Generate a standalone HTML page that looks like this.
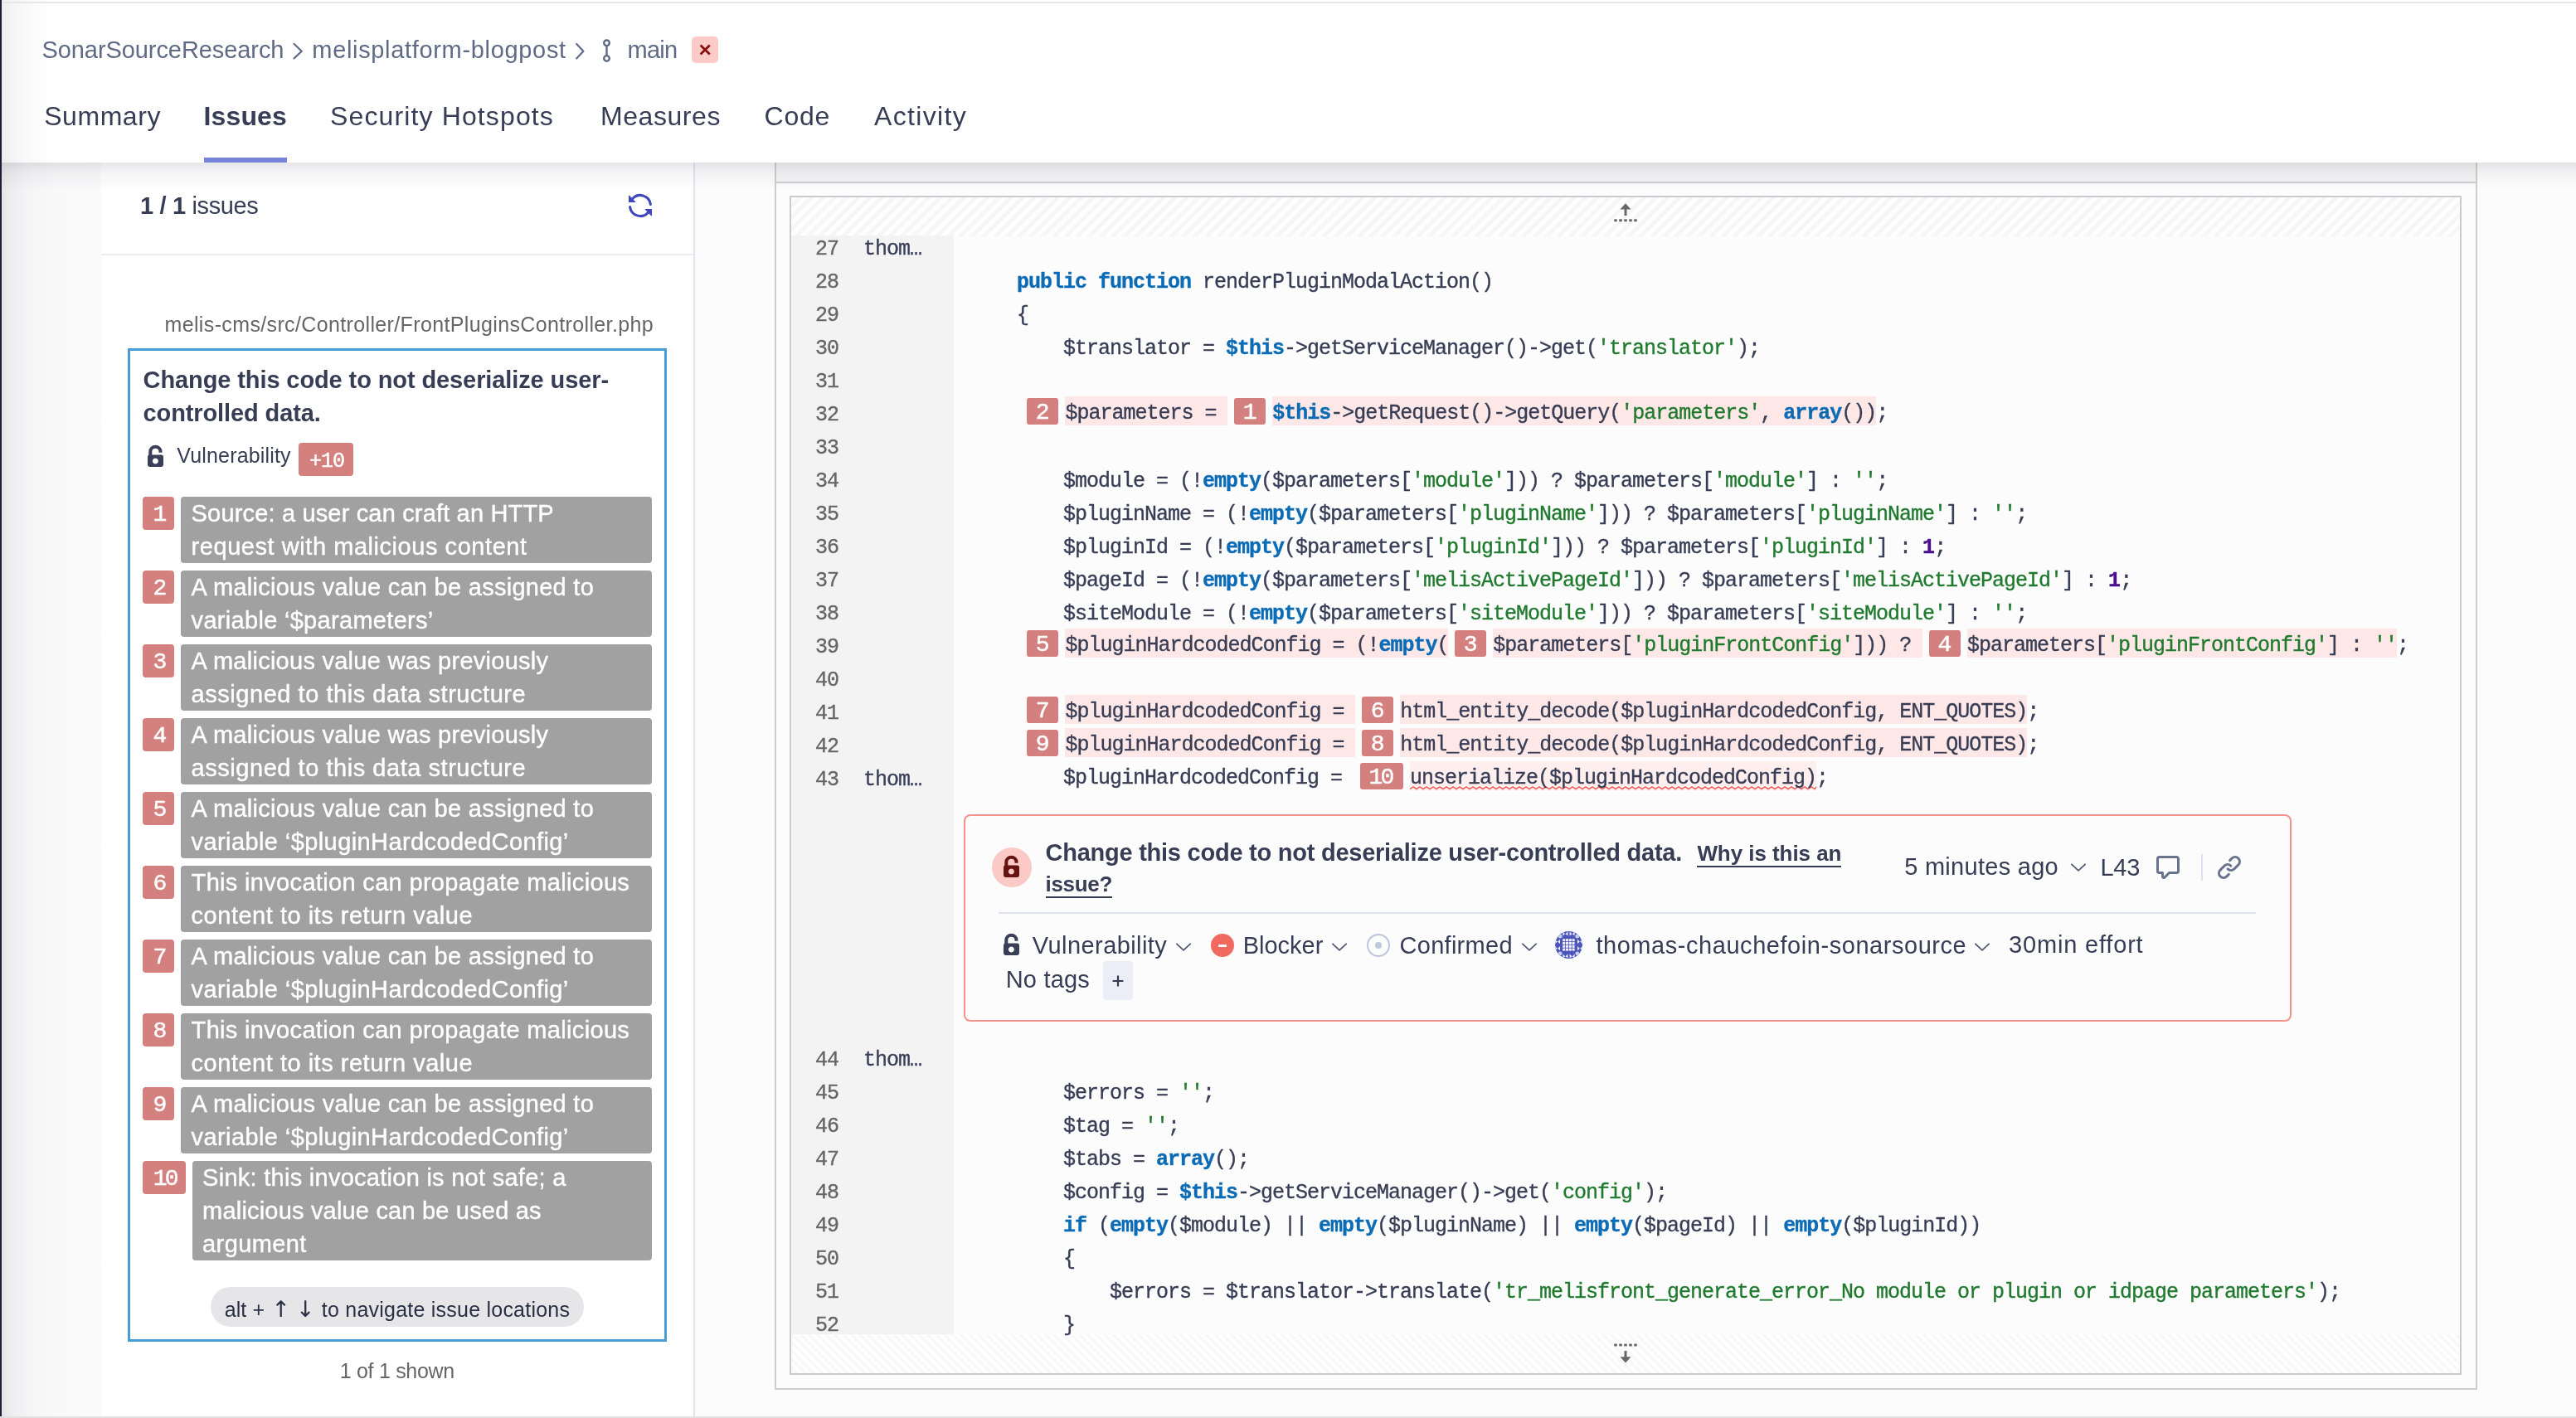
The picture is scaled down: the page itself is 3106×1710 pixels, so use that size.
<!DOCTYPE html><html lang="en"><head><meta charset="utf-8"><title>Issues - melisplatform-blogpost</title><style>
*{box-sizing:border-box;margin:0;padding:0}
html,body{width:3106px;height:1710px;overflow:hidden;background:#fcfcfc}
body{position:relative;font-family:"Liberation Sans",sans-serif;color:#373d55}
#app{position:absolute;left:0;top:0;width:3106px;height:1710px;will-change:transform}
.t{position:absolute;white-space:pre;display:block}
.s{font-family:"Liberation Sans",sans-serif}
.m{font-family:"Liberation Mono",monospace;-webkit-text-stroke:.35px currentColor}
.b{position:absolute}
svg{position:absolute;overflow:visible}
.k{color:#0b6bb5;font-weight:700}
.g{color:#1f7a2e}
.p{color:#4b0f8a;font-weight:700}
.bd{position:absolute;background:#d4807e;color:#fff;border-radius:3px;font-family:"Liberation Mono",monospace;font-weight:400;-webkit-text-stroke:.45px #fff;text-align:center;white-space:pre}
.hl{position:absolute;background:#fde8e7}
</style></head><body><div id="app">
<div class="b" style="left:0.0px;top:0.0px;width:122.0px;height:1710.0px;background:linear-gradient(90deg,#e5e5e7 2px,#eeeef0 14px,#f5f5f6 36px,#f9f9fa 70px,#fafafb 122px)"></div>
<div class="b" style="left:122.0px;top:196.0px;width:716.0px;height:1512.0px;background:#fff;border-right:2px solid #e1e5f2"></div>
<div class="b" style="left:122.0px;top:306.0px;width:714.0px;height:2.0px;background:#ebecf0"></div>
<div class="b" style="left:934.0px;top:190.0px;width:2053.0px;height:1486.0px;background:#fcfcfc;border:2px solid #cdcdcf"></div>
<div class="b" style="left:936.0px;top:196.0px;width:2049.0px;height:24.5px;background:#f5f5f6;border-bottom:2px solid #d0d0d2"></div>
<div class="b" style="left:952.0px;top:236.0px;width:2016.0px;height:1422.0px;background:#fcfcfd;border:2px solid #cbcbcd"></div>
<div class="b" style="left:954.0px;top:238.0px;width:2012.0px;height:47.0px;background:repeating-linear-gradient(135deg,#fefefe 0 4px,#fafafa 5px,#f6f6f7 6px 9px,#fafafa 10px)"></div>
<div class="b" style="left:954.0px;top:1609.0px;width:2012.0px;height:47.0px;background:repeating-linear-gradient(45deg,#fefefe 0 3px,#f8f8f8 4.1px 6.1px,#fefefe 7.2px)"></div>
<div class="b" style="left:954.0px;top:284.0px;width:196.0px;height:1325.0px;background:#f3f3f4"></div>
<div class="b" style="left:0.0px;top:196.0px;width:3106.0px;height:34.0px;background:linear-gradient(180deg,rgba(60,60,80,.13) 0,rgba(60,60,80,.05) 12px,rgba(60,60,80,0) 34px)"></div>
<div class="b" style="left:0.0px;top:0.0px;width:3106.0px;height:196.0px;background:#fff"></div>
<div class="b" style="left:0.0px;top:0.0px;width:64.0px;height:196.0px;background:linear-gradient(90deg,#ededef 0,#f6f6f7 18px,#fff 64px)"></div>
<div class="b" style="left:0.0px;top:2.0px;width:3106.0px;height:2.0px;background:#e7e7e8"></div>
<div class="b" style="left:246.0px;top:190.0px;width:100.0px;height:6.0px;background:#7583d8"></div>
<div class="b" style="left:0.0px;top:0.0px;width:2.0px;height:1710.0px;background:#1c1e33"></div>
<div class="b" style="left:0.0px;top:1708.0px;width:3106.0px;height:2.0px;background:#e2e2e3"></div>
<span id="t1" class="t s" style="left:50.5px;top:41.0px;font-size:29px;line-height:38px;color:#5f6a85;font-weight:400;letter-spacing:-0.078px;">SonarSourceResearch</span>
<span id="t2" class="t s" style="left:376.3px;top:41.0px;font-size:29px;line-height:38px;color:#5f6a85;font-weight:400;letter-spacing:0.671px;">melisplatform-blogpost</span>
<span id="t3" class="t s" style="left:756.6px;top:41.0px;font-size:29px;line-height:38px;color:#5f6a85;font-weight:400;letter-spacing:-0.815px;">main</span>
<svg style="left:340px;top:40px" width="400" height="44" viewBox="340 40 400 44" fill="none" stroke="#5f6a85" stroke-width="2.2" stroke-linecap="round" stroke-linejoin="round"><path d="M354.6 53l9.2 8.7-9.2 8.7"/><path d="M695.2 53l8.2 8.7-8.2 8.7" /><circle cx="731.5" cy="51.8" r="3.3" stroke-width="2.4"/><circle cx="731.5" cy="70.4" r="3.3" stroke-width="2.4"/><path d="M731.5 55.2v11.8" stroke-width="2.4"/></svg>
<div class="b" style="left:834.0px;top:44.0px;width:32.0px;height:32.0px;background:#fccbc8;border-radius:5px"></div>
<svg style="left:834px;top:44px" width="32" height="32" viewBox="0 0 32 32" stroke="#8c0f12" stroke-width="2.8" fill="none"><path d="M10.6 10.4l11.2 11.2M21.8 10.4L10.6 21.6"/></svg>
<span id="t4" class="t s" style="left:53.2px;top:119.0px;font-size:32px;line-height:42px;color:#373d55;font-weight:400;letter-spacing:0.556px;">Summary</span>
<span id="t5" class="t s" style="left:245.5px;top:119.0px;font-size:32px;line-height:42px;color:#373d55;font-weight:700;letter-spacing:0.146px;">Issues</span>
<span id="t6" class="t s" style="left:398.0px;top:119.0px;font-size:32px;line-height:42px;color:#373d55;font-weight:400;letter-spacing:1.131px;">Security Hotspots</span>
<span id="t7" class="t s" style="left:724.0px;top:119.0px;font-size:32px;line-height:42px;color:#373d55;font-weight:400;letter-spacing:0.562px;">Measures</span>
<span id="t8" class="t s" style="left:921.6px;top:119.0px;font-size:32px;line-height:42px;color:#373d55;font-weight:400;letter-spacing:0.725px;">Code</span>
<span id="t9" class="t s" style="left:1054.0px;top:119.0px;font-size:32px;line-height:42px;color:#373d55;font-weight:400;letter-spacing:1.332px;">Activity</span>
<span id="t10" class="t s" style="left:169.0px;top:229.0px;font-size:29px;line-height:38px;color:#373d55;font-weight:400;letter-spacing:-0.350px;"><b>1 / 1</b> issues</span>
<svg style="left:756px;top:232px" width="32" height="32" viewBox="0 0 16 16" fill="#3f47bd"><path d="M1.705 8.005a.75.75 0 0 1 .834.656 5.5 5.5 0 0 0 9.592 2.97l-1.204-1.204a.25.25 0 0 1 .177-.427h3.646a.25.25 0 0 1 .25.25v3.646a.25.25 0 0 1-.427.177l-1.38-1.38A7.002 7.002 0 0 1 1.05 8.84a.75.75 0 0 1 .656-.834ZM8 2.5a5.487 5.487 0 0 0-4.131 1.869l1.204 1.204A.25.25 0 0 1 4.896 6H1.25A.25.25 0 0 1 1 5.75V2.104a.25.25 0 0 1 .427-.177l1.38 1.38A7.002 7.002 0 0 1 14.95 7.16a.75.75 0 0 1-1.49.178A5.5 5.5 0 0 0 8 2.5Z"/></svg>
<span id="t11" class="t s" style="left:198.5px;top:375.0px;font-size:25px;line-height:32px;color:#666;font-weight:400;letter-spacing:0.362px;">melis-cms/src/Controller/FrontPluginsController.php</span>
<div class="b" style="left:154.3px;top:420.0px;width:649.7px;height:1197.8px;background:#fff;border:3.7px solid #4a9dd4"></div>
<span id="t12" class="t s" style="left:172.6px;top:439.0px;font-size:29px;line-height:38px;color:#373d55;font-weight:700;letter-spacing:-0.103px;">Change this code to not deserialize user-</span>
<span id="t13" class="t s" style="left:172.6px;top:479.0px;font-size:29px;line-height:38px;color:#373d55;font-weight:700;letter-spacing:-0.114px;">controlled data.</span>
<svg style="left:178px;top:537px" width="19.0" height="26.0" viewBox="0 0 19 26"><path d="M3.3 12.5V7.8a6.1 6.1 0 0 1 12.2 0v1" fill="none" stroke="#3a3f58" stroke-width="4" stroke-linecap="butt"/><path fill-rule="evenodd" fill="#3a3f58" d="M2.4 11.4h14.2a2.4 2.4 0 0 1 2.4 2.4v9.8a2.4 2.4 0 0 1-2.4 2.4H2.4A2.4 2.4 0 0 1 0 23.600v-9.8a2.4 2.4 0 0 1 2.4-2.400ZM9.4 15.6a3.500 3.500 0 1 0 .001 0Z"/></svg>
<span id="t14" class="t s" style="left:213.3px;top:533.0px;font-size:25px;line-height:32px;color:#373d55;font-weight:400;letter-spacing:0.172px;">Vulnerability</span>
<div class="b" style="left:360.0px;top:534.0px;width:66.0px;height:40.0px;background:#d4807e;border-radius:4px"></div>
<span id="t15" class="t m" style="left:373.0px;top:541.0px;font-size:25px;line-height:32px;color:#fff;font-weight:400;letter-spacing:-1.005px;-webkit-text-stroke:.45px #fff">+10</span>
<div class="b" style="left:172.3px;top:599.2px;width:37.4px;height:39.6px;background:#d4807e;border-radius:4px"></div>
<span id="t16" class="t m" style="left:184.6px;top:603.0px;font-size:28px;line-height:36px;color:#fff;font-weight:400;letter-spacing:-2.812px;-webkit-text-stroke:.45px #fff">1</span>
<div class="b" style="left:218.0px;top:599.2px;width:568.2px;height:79.4px;background:#a1a1a1;border-radius:4px"></div>
<span id="t17" class="t s" style="left:230.6px;top:600.0px;font-size:29px;line-height:38px;color:#fff;font-weight:400;letter-spacing:0.163px;-webkit-text-stroke:.4px #fff">Source: a user can craft an HTTP</span>
<span id="t18" class="t s" style="left:230.6px;top:640.0px;font-size:29px;line-height:38px;color:#fff;font-weight:400;letter-spacing:0.551px;-webkit-text-stroke:.4px #fff">request with malicious content</span>
<div class="b" style="left:172.3px;top:688.2px;width:37.4px;height:39.6px;background:#d4807e;border-radius:4px"></div>
<span id="t19" class="t m" style="left:184.6px;top:692.0px;font-size:28px;line-height:36px;color:#fff;font-weight:400;letter-spacing:-2.812px;-webkit-text-stroke:.45px #fff">2</span>
<div class="b" style="left:218.0px;top:688.2px;width:568.2px;height:79.4px;background:#a1a1a1;border-radius:4px"></div>
<span id="t20" class="t s" style="left:230.6px;top:689.0px;font-size:29px;line-height:38px;color:#fff;font-weight:400;letter-spacing:0.276px;-webkit-text-stroke:.4px #fff">A malicious value can be assigned to</span>
<span id="t21" class="t s" style="left:230.6px;top:729.0px;font-size:29px;line-height:38px;color:#fff;font-weight:400;letter-spacing:0.304px;-webkit-text-stroke:.4px #fff">variable ‘$parameters’</span>
<div class="b" style="left:172.3px;top:777.2px;width:37.4px;height:39.6px;background:#d4807e;border-radius:4px"></div>
<span id="t22" class="t m" style="left:184.6px;top:781.0px;font-size:28px;line-height:36px;color:#fff;font-weight:400;letter-spacing:-2.812px;-webkit-text-stroke:.45px #fff">3</span>
<div class="b" style="left:218.0px;top:777.2px;width:568.2px;height:79.4px;background:#a1a1a1;border-radius:4px"></div>
<span id="t23" class="t s" style="left:230.6px;top:778.0px;font-size:29px;line-height:38px;color:#fff;font-weight:400;letter-spacing:0.262px;-webkit-text-stroke:.4px #fff">A malicious value was previously</span>
<span id="t24" class="t s" style="left:230.6px;top:818.0px;font-size:29px;line-height:38px;color:#fff;font-weight:400;letter-spacing:0.539px;-webkit-text-stroke:.4px #fff">assigned to this data structure</span>
<div class="b" style="left:172.3px;top:866.2px;width:37.4px;height:39.6px;background:#d4807e;border-radius:4px"></div>
<span id="t25" class="t m" style="left:184.6px;top:870.0px;font-size:28px;line-height:36px;color:#fff;font-weight:400;letter-spacing:-2.812px;-webkit-text-stroke:.45px #fff">4</span>
<div class="b" style="left:218.0px;top:866.2px;width:568.2px;height:79.4px;background:#a1a1a1;border-radius:4px"></div>
<span id="t26" class="t s" style="left:230.6px;top:867.0px;font-size:29px;line-height:38px;color:#fff;font-weight:400;letter-spacing:0.262px;-webkit-text-stroke:.4px #fff">A malicious value was previously</span>
<span id="t27" class="t s" style="left:230.6px;top:907.0px;font-size:29px;line-height:38px;color:#fff;font-weight:400;letter-spacing:0.539px;-webkit-text-stroke:.4px #fff">assigned to this data structure</span>
<div class="b" style="left:172.3px;top:955.2px;width:37.4px;height:39.6px;background:#d4807e;border-radius:4px"></div>
<span id="t28" class="t m" style="left:184.6px;top:959.0px;font-size:28px;line-height:36px;color:#fff;font-weight:400;letter-spacing:-2.812px;-webkit-text-stroke:.45px #fff">5</span>
<div class="b" style="left:218.0px;top:955.2px;width:568.2px;height:79.4px;background:#a1a1a1;border-radius:4px"></div>
<span id="t29" class="t s" style="left:230.6px;top:956.0px;font-size:29px;line-height:38px;color:#fff;font-weight:400;letter-spacing:0.276px;-webkit-text-stroke:.4px #fff">A malicious value can be assigned to</span>
<span id="t30" class="t s" style="left:230.6px;top:996.0px;font-size:29px;line-height:38px;color:#fff;font-weight:400;letter-spacing:0.405px;-webkit-text-stroke:.4px #fff">variable ‘$pluginHardcodedConfig’</span>
<div class="b" style="left:172.3px;top:1044.2px;width:37.4px;height:39.6px;background:#d4807e;border-radius:4px"></div>
<span id="t31" class="t m" style="left:184.6px;top:1048.0px;font-size:28px;line-height:36px;color:#fff;font-weight:400;letter-spacing:-2.812px;-webkit-text-stroke:.45px #fff">6</span>
<div class="b" style="left:218.0px;top:1044.2px;width:568.2px;height:79.4px;background:#a1a1a1;border-radius:4px"></div>
<span id="t32" class="t s" style="left:230.6px;top:1045.0px;font-size:29px;line-height:38px;color:#fff;font-weight:400;letter-spacing:0.327px;-webkit-text-stroke:.4px #fff">This invocation can propagate malicious</span>
<span id="t33" class="t s" style="left:230.6px;top:1085.0px;font-size:29px;line-height:38px;color:#fff;font-weight:400;letter-spacing:0.513px;-webkit-text-stroke:.4px #fff">content to its return value</span>
<div class="b" style="left:172.3px;top:1133.2px;width:37.4px;height:39.6px;background:#d4807e;border-radius:4px"></div>
<span id="t34" class="t m" style="left:184.6px;top:1137.0px;font-size:28px;line-height:36px;color:#fff;font-weight:400;letter-spacing:-2.812px;-webkit-text-stroke:.45px #fff">7</span>
<div class="b" style="left:218.0px;top:1133.2px;width:568.2px;height:79.4px;background:#a1a1a1;border-radius:4px"></div>
<span id="t35" class="t s" style="left:230.6px;top:1134.0px;font-size:29px;line-height:38px;color:#fff;font-weight:400;letter-spacing:0.276px;-webkit-text-stroke:.4px #fff">A malicious value can be assigned to</span>
<span id="t36" class="t s" style="left:230.6px;top:1174.0px;font-size:29px;line-height:38px;color:#fff;font-weight:400;letter-spacing:0.405px;-webkit-text-stroke:.4px #fff">variable ‘$pluginHardcodedConfig’</span>
<div class="b" style="left:172.3px;top:1222.2px;width:37.4px;height:39.6px;background:#d4807e;border-radius:4px"></div>
<span id="t37" class="t m" style="left:184.6px;top:1226.0px;font-size:28px;line-height:36px;color:#fff;font-weight:400;letter-spacing:-2.812px;-webkit-text-stroke:.45px #fff">8</span>
<div class="b" style="left:218.0px;top:1222.2px;width:568.2px;height:79.4px;background:#a1a1a1;border-radius:4px"></div>
<span id="t38" class="t s" style="left:230.6px;top:1223.0px;font-size:29px;line-height:38px;color:#fff;font-weight:400;letter-spacing:0.327px;-webkit-text-stroke:.4px #fff">This invocation can propagate malicious</span>
<span id="t39" class="t s" style="left:230.6px;top:1263.0px;font-size:29px;line-height:38px;color:#fff;font-weight:400;letter-spacing:0.513px;-webkit-text-stroke:.4px #fff">content to its return value</span>
<div class="b" style="left:172.3px;top:1311.2px;width:37.4px;height:39.6px;background:#d4807e;border-radius:4px"></div>
<span id="t40" class="t m" style="left:184.6px;top:1315.0px;font-size:28px;line-height:36px;color:#fff;font-weight:400;letter-spacing:-2.812px;-webkit-text-stroke:.45px #fff">9</span>
<div class="b" style="left:218.0px;top:1311.2px;width:568.2px;height:79.4px;background:#a1a1a1;border-radius:4px"></div>
<span id="t41" class="t s" style="left:230.6px;top:1312.0px;font-size:29px;line-height:38px;color:#fff;font-weight:400;letter-spacing:0.276px;-webkit-text-stroke:.4px #fff">A malicious value can be assigned to</span>
<span id="t42" class="t s" style="left:230.6px;top:1352.0px;font-size:29px;line-height:38px;color:#fff;font-weight:400;letter-spacing:0.405px;-webkit-text-stroke:.4px #fff">variable ‘$pluginHardcodedConfig’</span>
<div class="b" style="left:172.3px;top:1400.2px;width:51.6px;height:39.6px;background:#d4807e;border-radius:4px"></div>
<span id="t43" class="t m" style="left:184.7px;top:1404.0px;font-size:28px;line-height:36px;color:#fff;font-weight:400;letter-spacing:-2.805px;-webkit-text-stroke:.45px #fff">10</span>
<div class="b" style="left:232.0px;top:1400.2px;width:554.2px;height:119.4px;background:#a1a1a1;border-radius:4px"></div>
<span id="t44" class="t s" style="left:244.1px;top:1401.0px;font-size:29px;line-height:38px;color:#fff;font-weight:400;letter-spacing:0.270px;-webkit-text-stroke:.4px #fff">Sink: this invocation is not safe; a</span>
<span id="t45" class="t s" style="left:244.1px;top:1441.0px;font-size:29px;line-height:38px;color:#fff;font-weight:400;letter-spacing:0.186px;-webkit-text-stroke:.4px #fff">malicious value can be used as</span>
<span id="t46" class="t s" style="left:244.1px;top:1481.0px;font-size:29px;line-height:38px;color:#fff;font-weight:400;letter-spacing:0.386px;-webkit-text-stroke:.4px #fff">argument</span>
<div class="b" style="left:254.0px;top:1551.6px;width:450.3px;height:48.2px;background:#e6e6e9;border-radius:24px"></div>
<span id="t47" class="t s" style="left:270.7px;top:1563.0px;font-size:25px;line-height:32px;color:#2a2f45;font-weight:400;letter-spacing:0.109px;">alt +</span>
<span id="t48" class="t s" style="left:327.6px;top:1563.0px;font-size:25px;line-height:32px;color:#2a2f45;font-weight:400;letter-spacing:0.000px;font-family:'DejaVu Sans',sans-serif;font-size:27px">↑</span>
<span id="t49" class="t s" style="left:357.0px;top:1563.0px;font-size:25px;line-height:32px;color:#2a2f45;font-weight:400;letter-spacing:0.000px;font-family:'DejaVu Sans',sans-serif;font-size:27px">↓</span>
<span id="t50" class="t s" style="left:387.8px;top:1563.0px;font-size:25px;line-height:32px;color:#2a2f45;font-weight:400;letter-spacing:0.228px;">to navigate issue locations</span>
<span id="t51" class="t s" style="left:409.7px;top:1637.0px;font-size:25px;line-height:32px;color:#666;font-weight:400;letter-spacing:-0.289px;">1 of 1 shown</span>
<span class="t m" style="left:983.0px;top:281.0px;font-size:25px;line-height:40px;color:#666;font-weight:400;letter-spacing:-1.002px;">27</span>
<span class="t m" style="left:983.0px;top:321.0px;font-size:25px;line-height:40px;color:#666;font-weight:400;letter-spacing:-1.002px;">28</span>
<span class="t m" style="left:983.0px;top:361.0px;font-size:25px;line-height:40px;color:#666;font-weight:400;letter-spacing:-1.002px;">29</span>
<span class="t m" style="left:983.0px;top:401.0px;font-size:25px;line-height:40px;color:#666;font-weight:400;letter-spacing:-1.002px;">30</span>
<span class="t m" style="left:983.0px;top:441.0px;font-size:25px;line-height:40px;color:#666;font-weight:400;letter-spacing:-1.002px;">31</span>
<span class="t m" style="left:983.0px;top:481.0px;font-size:25px;line-height:40px;color:#666;font-weight:400;letter-spacing:-1.002px;">32</span>
<span class="t m" style="left:983.0px;top:521.0px;font-size:25px;line-height:40px;color:#666;font-weight:400;letter-spacing:-1.002px;">33</span>
<span class="t m" style="left:983.0px;top:561.0px;font-size:25px;line-height:40px;color:#666;font-weight:400;letter-spacing:-1.002px;">34</span>
<span class="t m" style="left:983.0px;top:601.0px;font-size:25px;line-height:40px;color:#666;font-weight:400;letter-spacing:-1.002px;">35</span>
<span class="t m" style="left:983.0px;top:641.0px;font-size:25px;line-height:40px;color:#666;font-weight:400;letter-spacing:-1.002px;">36</span>
<span class="t m" style="left:983.0px;top:681.0px;font-size:25px;line-height:40px;color:#666;font-weight:400;letter-spacing:-1.002px;">37</span>
<span class="t m" style="left:983.0px;top:721.0px;font-size:25px;line-height:40px;color:#666;font-weight:400;letter-spacing:-1.002px;">38</span>
<span class="t m" style="left:983.0px;top:761.0px;font-size:25px;line-height:40px;color:#666;font-weight:400;letter-spacing:-1.002px;">39</span>
<span class="t m" style="left:983.0px;top:801.0px;font-size:25px;line-height:40px;color:#666;font-weight:400;letter-spacing:-1.002px;">40</span>
<span class="t m" style="left:983.0px;top:841.0px;font-size:25px;line-height:40px;color:#666;font-weight:400;letter-spacing:-1.002px;">41</span>
<span class="t m" style="left:983.0px;top:881.0px;font-size:25px;line-height:40px;color:#666;font-weight:400;letter-spacing:-1.002px;">42</span>
<span class="t m" style="left:983.0px;top:921.0px;font-size:25px;line-height:40px;color:#666;font-weight:400;letter-spacing:-1.002px;">43</span>
<span class="t m" style="left:983.0px;top:1259.0px;font-size:25px;line-height:40px;color:#666;font-weight:400;letter-spacing:-1.002px;">44</span>
<span class="t m" style="left:983.0px;top:1299.0px;font-size:25px;line-height:40px;color:#666;font-weight:400;letter-spacing:-1.002px;">45</span>
<span class="t m" style="left:983.0px;top:1339.0px;font-size:25px;line-height:40px;color:#666;font-weight:400;letter-spacing:-1.002px;">46</span>
<span class="t m" style="left:983.0px;top:1379.0px;font-size:25px;line-height:40px;color:#666;font-weight:400;letter-spacing:-1.002px;">47</span>
<span class="t m" style="left:983.0px;top:1419.0px;font-size:25px;line-height:40px;color:#666;font-weight:400;letter-spacing:-1.002px;">48</span>
<span class="t m" style="left:983.0px;top:1459.0px;font-size:25px;line-height:40px;color:#666;font-weight:400;letter-spacing:-1.002px;">49</span>
<span class="t m" style="left:983.0px;top:1499.0px;font-size:25px;line-height:40px;color:#666;font-weight:400;letter-spacing:-1.002px;">50</span>
<span class="t m" style="left:983.0px;top:1539.0px;font-size:25px;line-height:40px;color:#666;font-weight:400;letter-spacing:-1.002px;">51</span>
<span class="t m" style="left:983.0px;top:1579.0px;font-size:25px;line-height:40px;color:#666;font-weight:400;letter-spacing:-1.002px;">52</span>
<span class="t m" style="left:1041.0px;top:281.0px;font-size:25px;line-height:40px;color:#3a3f58;font-weight:400;letter-spacing:-1.002px;">thom…</span>
<span class="t m" style="left:1041.0px;top:921.0px;font-size:25px;line-height:40px;color:#3a3f58;font-weight:400;letter-spacing:-1.002px;">thom…</span>
<span class="t m" style="left:1041.0px;top:1259.0px;font-size:25px;line-height:40px;color:#3a3f58;font-weight:400;letter-spacing:-1.002px;">thom…</span>
<span class="t m" style="left:1226.0px;top:321.0px;font-size:25px;line-height:40px;color:#373d55;font-weight:400;letter-spacing:-1.002px;"><span class="k">public</span> <span class="k">function</span> renderPluginModalAction()</span>
<span class="t m" style="left:1226.0px;top:361.0px;font-size:25px;line-height:40px;color:#373d55;font-weight:400;letter-spacing:-1.002px;">{</span>
<span class="t m" style="left:1282.0px;top:401.0px;font-size:25px;line-height:40px;color:#373d55;font-weight:400;letter-spacing:-1.002px;">$translator = <span class="k">$this</span>-&gt;getServiceManager()-&gt;get(<span class="g">'translator'</span>);</span>
<span class="bd" style="left:1238.4px;top:479.9px;width:37.6px;height:31.9px;line-height:36.3px;font-size:28px;letter-spacing:-2.8px;text-indent:-2.8px">2</span>
<span class="hl" style="left:1284.4px;top:478.2px;width:195.5px;height:35.3px"></span>
<span class="t m" style="left:1284.4px;top:479.0px;font-size:25px;line-height:40px;color:#373d55;font-weight:400;letter-spacing:-1.002px;">$parameters = </span>
<span class="bd" style="left:1488.4px;top:479.9px;width:37.6px;height:31.9px;line-height:36.3px;font-size:28px;letter-spacing:-2.8px;text-indent:-2.8px">1</span>
<span class="hl" style="left:1534.2px;top:478.2px;width:727.5px;height:35.3px"></span>
<span class="t m" style="left:1534.2px;top:479.0px;font-size:25px;line-height:40px;color:#373d55;font-weight:400;letter-spacing:-1.002px;"><span class="k">$this</span>-&gt;getRequest()-&gt;getQuery(<span class="g">'parameters'</span>, <span class="k">array</span>())</span>
<span class="t m" style="left:2262.2px;top:479.0px;font-size:25px;line-height:40px;color:#373d55;font-weight:400;letter-spacing:-1.002px;">;</span>
<span class="t m" style="left:1282.0px;top:561.0px;font-size:25px;line-height:40px;color:#373d55;font-weight:400;letter-spacing:-1.002px;">$module = (!<span class="k">empty</span>($parameters[<span class="g">'module'</span>])) ? $parameters[<span class="g">'module'</span>] : <span class="g">''</span>;</span>
<span class="t m" style="left:1282.0px;top:601.0px;font-size:25px;line-height:40px;color:#373d55;font-weight:400;letter-spacing:-1.002px;">$pluginName = (!<span class="k">empty</span>($parameters[<span class="g">'pluginName'</span>])) ? $parameters[<span class="g">'pluginName'</span>] : <span class="g">''</span>;</span>
<span class="t m" style="left:1282.0px;top:641.0px;font-size:25px;line-height:40px;color:#373d55;font-weight:400;letter-spacing:-1.002px;">$pluginId = (!<span class="k">empty</span>($parameters[<span class="g">'pluginId'</span>])) ? $parameters[<span class="g">'pluginId'</span>] : <span class="p">1</span>;</span>
<span class="t m" style="left:1282.0px;top:681.0px;font-size:25px;line-height:40px;color:#373d55;font-weight:400;letter-spacing:-1.002px;">$pageId = (!<span class="k">empty</span>($parameters[<span class="g">'melisActivePageId'</span>])) ? $parameters[<span class="g">'melisActivePageId'</span>] : <span class="p">1</span>;</span>
<span class="t m" style="left:1282.0px;top:721.0px;font-size:25px;line-height:40px;color:#373d55;font-weight:400;letter-spacing:-1.002px;">$siteModule = (!<span class="k">empty</span>($parameters[<span class="g">'siteModule'</span>])) ? $parameters[<span class="g">'siteModule'</span>] : <span class="g">''</span>;</span>
<span class="bd" style="left:1238.4px;top:759.9px;width:37.6px;height:31.9px;line-height:36.3px;font-size:28px;letter-spacing:-2.8px;text-indent:-2.8px">5</span>
<span class="hl" style="left:1284.4px;top:758.2px;width:461.5px;height:35.3px"></span>
<span class="t m" style="left:1284.4px;top:759.0px;font-size:25px;line-height:40px;color:#373d55;font-weight:400;letter-spacing:-1.002px;">$pluginHardcodedConfig = (!<span class="k">empty</span>(</span>
<span class="bd" style="left:1754.4px;top:759.9px;width:37.6px;height:31.9px;line-height:36.3px;font-size:28px;letter-spacing:-2.8px;text-indent:-2.8px">3</span>
<span class="hl" style="left:1800.2px;top:758.2px;width:517.5px;height:35.3px"></span>
<span class="t m" style="left:1800.2px;top:759.0px;font-size:25px;line-height:40px;color:#373d55;font-weight:400;letter-spacing:-1.002px;">$parameters[<span class="g">'pluginFrontConfig'</span>])) ? </span>
<span class="bd" style="left:2326.2px;top:759.9px;width:37.6px;height:31.9px;line-height:36.3px;font-size:28px;letter-spacing:-2.8px;text-indent:-2.8px">4</span>
<span class="hl" style="left:2372.0px;top:758.2px;width:517.5px;height:35.3px"></span>
<span class="t m" style="left:2372.0px;top:759.0px;font-size:25px;line-height:40px;color:#373d55;font-weight:400;letter-spacing:-1.002px;">$parameters[<span class="g">'pluginFrontConfig'</span>] : <span class="g">''</span></span>
<span class="t m" style="left:2890.0px;top:759.0px;font-size:25px;line-height:40px;color:#373d55;font-weight:400;letter-spacing:-1.002px;">;</span>
<span class="bd" style="left:1238.4px;top:839.9px;width:37.6px;height:31.9px;line-height:36.3px;font-size:28px;letter-spacing:-2.8px;text-indent:-2.8px">7</span>
<span class="hl" style="left:1284.4px;top:838.2px;width:349.5px;height:35.3px"></span>
<span class="t m" style="left:1284.4px;top:839.0px;font-size:25px;line-height:40px;color:#373d55;font-weight:400;letter-spacing:-1.002px;">$pluginHardcodedConfig = </span>
<span class="bd" style="left:1642.4px;top:839.9px;width:37.6px;height:31.9px;line-height:36.3px;font-size:28px;letter-spacing:-2.8px;text-indent:-2.8px">6</span>
<span class="hl" style="left:1688.2px;top:838.2px;width:755.5px;height:35.3px"></span>
<span class="t m" style="left:1688.2px;top:839.0px;font-size:25px;line-height:40px;color:#373d55;font-weight:400;letter-spacing:-1.002px;">html_entity_decode($pluginHardcodedConfig, ENT_QUOTES)</span>
<span class="t m" style="left:2444.2px;top:839.0px;font-size:25px;line-height:40px;color:#373d55;font-weight:400;letter-spacing:-1.002px;">;</span>
<span class="bd" style="left:1238.4px;top:879.9px;width:37.6px;height:31.9px;line-height:36.3px;font-size:28px;letter-spacing:-2.8px;text-indent:-2.8px">9</span>
<span class="hl" style="left:1284.4px;top:878.2px;width:349.5px;height:35.3px"></span>
<span class="t m" style="left:1284.4px;top:879.0px;font-size:25px;line-height:40px;color:#373d55;font-weight:400;letter-spacing:-1.002px;">$pluginHardcodedConfig = </span>
<span class="bd" style="left:1642.4px;top:879.9px;width:37.6px;height:31.9px;line-height:36.3px;font-size:28px;letter-spacing:-2.8px;text-indent:-2.8px">8</span>
<span class="hl" style="left:1688.2px;top:878.2px;width:755.5px;height:35.3px"></span>
<span class="t m" style="left:1688.2px;top:879.0px;font-size:25px;line-height:40px;color:#373d55;font-weight:400;letter-spacing:-1.002px;">html_entity_decode($pluginHardcodedConfig, ENT_QUOTES)</span>
<span class="t m" style="left:2444.2px;top:879.0px;font-size:25px;line-height:40px;color:#373d55;font-weight:400;letter-spacing:-1.002px;">;</span>
<span class="t m" style="left:1282.0px;top:919.0px;font-size:25px;line-height:40px;color:#373d55;font-weight:400;letter-spacing:-1.002px;">$pluginHardcodedConfig = </span>
<span class="bd" style="left:1640.0px;top:919.9px;width:51.8px;height:31.9px;line-height:36.3px;font-size:28px;letter-spacing:-2.8px;text-indent:-2.8px">10</span>
<span class="hl" style="left:1700.0px;top:918.2px;width:489.5px;height:35.3px;background:#feeeed"></span>
<svg style="left:0;top:0" width="10" height="10"><path d="M1700.0 951.5L1704.0 948.9L1708.0 951.5L1712.0 948.9L1716.0 951.5L1720.0 948.9L1724.0 951.5L1728.0 948.9L1732.0 951.5L1736.0 948.9L1740.0 951.5L1744.0 948.9L1748.0 951.5L1752.0 948.9L1756.0 951.5L1760.0 948.9L1764.0 951.5L1768.0 948.9L1772.0 951.5L1776.0 948.9L1780.0 951.5L1784.0 948.9L1788.0 951.5L1792.0 948.9L1796.0 951.5L1800.0 948.9L1804.0 951.5L1808.0 948.9L1812.0 951.5L1816.0 948.9L1820.0 951.5L1824.0 948.9L1828.0 951.5L1832.0 948.9L1836.0 951.5L1840.0 948.9L1844.0 951.5L1848.0 948.9L1852.0 951.5L1856.0 948.9L1860.0 951.5L1864.0 948.9L1868.0 951.5L1872.0 948.9L1876.0 951.5L1880.0 948.9L1884.0 951.5L1888.0 948.9L1892.0 951.5L1896.0 948.9L1900.0 951.5L1904.0 948.9L1908.0 951.5L1912.0 948.9L1916.0 951.5L1920.0 948.9L1924.0 951.5L1928.0 948.9L1932.0 951.5L1936.0 948.9L1940.0 951.5L1944.0 948.9L1948.0 951.5L1952.0 948.9L1956.0 951.5L1960.0 948.9L1964.0 951.5L1968.0 948.9L1972.0 951.5L1976.0 948.9L1980.0 951.5L1984.0 948.9L1988.0 951.5L1992.0 948.9L1996.0 951.5L2000.0 948.9L2004.0 951.5L2008.0 948.9L2012.0 951.5L2016.0 948.9L2020.0 951.5L2024.0 948.9L2028.0 951.5L2032.0 948.9L2036.0 951.5L2040.0 948.9L2044.0 951.5L2048.0 948.9L2052.0 951.5L2056.0 948.9L2060.0 951.5L2064.0 948.9L2068.0 951.5L2072.0 948.9L2076.0 951.5L2080.0 948.9L2084.0 951.5L2088.0 948.9L2092.0 951.5L2096.0 948.9L2100.0 951.5L2104.0 948.9L2108.0 951.5L2112.0 948.9L2116.0 951.5L2120.0 948.9L2124.0 951.5L2128.0 948.9L2132.0 951.5L2136.0 948.9L2140.0 951.5L2144.0 948.9L2148.0 951.5L2152.0 948.9L2156.0 951.5L2160.0 948.9L2164.0 951.5L2168.0 948.9L2172.0 951.5L2176.0 948.9L2180.0 951.5L2184.0 948.9L2188.0 951.5L2190.0 948.9" fill="none" stroke="#ee665f" stroke-width="1.5"/></svg>
<span class="t m" style="left:1700.0px;top:919.0px;font-size:25px;line-height:40px;color:#373d55;font-weight:400;letter-spacing:-1.002px;">unserialize($pluginHardcodedConfig)</span>
<span class="t m" style="left:2190.0px;top:919.0px;font-size:25px;line-height:40px;color:#373d55;font-weight:400;letter-spacing:-1.002px;">;</span>
<span class="t m" style="left:1282.0px;top:1299.0px;font-size:25px;line-height:40px;color:#373d55;font-weight:400;letter-spacing:-1.002px;">$errors = <span class="g">''</span>;</span>
<span class="t m" style="left:1282.0px;top:1339.0px;font-size:25px;line-height:40px;color:#373d55;font-weight:400;letter-spacing:-1.002px;">$tag = <span class="g">''</span>;</span>
<span class="t m" style="left:1282.0px;top:1379.0px;font-size:25px;line-height:40px;color:#373d55;font-weight:400;letter-spacing:-1.002px;">$tabs = <span class="k">array</span>();</span>
<span class="t m" style="left:1282.0px;top:1419.0px;font-size:25px;line-height:40px;color:#373d55;font-weight:400;letter-spacing:-1.002px;">$config = <span class="k">$this</span>-&gt;getServiceManager()-&gt;get(<span class="g">'config'</span>);</span>
<span class="t m" style="left:1282.0px;top:1459.0px;font-size:25px;line-height:40px;color:#373d55;font-weight:400;letter-spacing:-1.002px;"><span class="k">if</span> (<span class="k">empty</span>($module) || <span class="k">empty</span>($pluginName) || <span class="k">empty</span>($pageId) || <span class="k">empty</span>($pluginId))</span>
<span class="t m" style="left:1282.0px;top:1499.0px;font-size:25px;line-height:40px;color:#373d55;font-weight:400;letter-spacing:-1.002px;">{</span>
<span class="t m" style="left:1338.0px;top:1539.0px;font-size:25px;line-height:40px;color:#373d55;font-weight:400;letter-spacing:-1.002px;">$errors = $translator-&gt;translate(<span class="g">'tr_melisfront_generate_error_No module or plugin or idpage parameters'</span>);</span>
<span class="t m" style="left:1282.0px;top:1579.0px;font-size:25px;line-height:40px;color:#373d55;font-weight:400;letter-spacing:-1.002px;">}</span>
<svg style="left:1944px;top:244.6px" width="32" height="24" viewBox="0 0 32 24" fill="#686868"><path d="M16 0.300l6.500 7.200h-5v7.400h-3v-7.400h-5z"/><rect x="2.2" y="19.200" width="3.600" height="3" rx=".8"/><rect x="8.2" y="19.200" width="3.600" height="3" rx=".8"/><rect x="14.2" y="19.200" width="3.600" height="3" rx=".8"/><rect x="20.2" y="19.200" width="3.600" height="3" rx=".8"/><rect x="26.2" y="19.200" width="3.600" height="3" rx=".8"/></svg>
<svg style="left:1944px;top:1620px" width="32" height="24" viewBox="0 0 32 24" fill="#686868"><rect x="2.2" y="0.600" width="3.600" height="3" rx=".8"/><rect x="8.2" y="0.600" width="3.600" height="3" rx=".8"/><rect x="14.2" y="0.600" width="3.600" height="3" rx=".8"/><rect x="20.2" y="0.600" width="3.600" height="3" rx=".8"/><rect x="26.2" y="0.600" width="3.600" height="3" rx=".8"/><path d="M16 23.500l6.500-7.200h-5v-7.400h-3v7.400h-5z"/></svg>
<div class="b" style="left:1162.0px;top:982.4px;width:1601.0px;height:250.0px;background:#fcfcfd;border:2px solid #f3928b;border-radius:8px"></div>
<div class="b" style="left:1196.0px;top:1022.0px;width:48.0px;height:48.0px;background:#fbc9c6;border-radius:50%"></div>
<svg style="left:1210.3px;top:1032.3px" width="19.0" height="26.0" viewBox="0 0 19 26"><path d="M3.3 12.5V7.8a6.1 6.1 0 0 1 12.2 0v1" fill="none" stroke="#641512" stroke-width="4" stroke-linecap="butt"/><path fill-rule="evenodd" fill="#641512" d="M2.4 11.4h14.2a2.4 2.4 0 0 1 2.4 2.4v9.8a2.4 2.4 0 0 1-2.4 2.4H2.4A2.4 2.4 0 0 1 0 23.600v-9.8a2.4 2.4 0 0 1 2.4-2.400ZM9.4 15.6a3.500 3.500 0 1 0 .001 0Z"/></svg>
<span id="t52" class="t s" style="left:1260.5px;top:1009.0px;font-size:29px;line-height:38px;color:#373d55;font-weight:700;letter-spacing:-0.246px;">Change this code to not deserialize user-controlled data.</span>
<span id="t53" class="t s" style="left:2046.4px;top:1012.0px;font-size:26px;line-height:34px;color:#373d55;font-weight:700;letter-spacing:-0.058px;border-bottom:2.4px solid #333a52;height:33.5px">Why is this an</span>
<span id="t54" class="t s" style="left:1260.5px;top:1049.0px;font-size:26px;line-height:34px;color:#373d55;font-weight:700;letter-spacing:-0.312px;border-bottom:2.4px solid #333a52;height:33.5px">issue?</span>
<span id="t55" class="t s" style="left:2296.2px;top:1026.0px;font-size:29px;line-height:38px;color:#373d55;font-weight:400;letter-spacing:0.279px;">5 minutes ago</span>
<span id="t56" class="t s" style="left:2532.5px;top:1027.0px;font-size:29px;line-height:38px;color:#373d55;font-weight:400;letter-spacing:-0.264px;">L43</span>
<svg style="left:2494.3px;top:1038.3px" width="24" height="16" viewBox="0 0 24 16" fill="none" stroke="#535a73" stroke-width="1.800" stroke-linecap="round" stroke-linejoin="round"><path d="M3.900 4.300l8.100 7.500 8.100-7.500"/></svg>
<svg style="left:2598.1px;top:1029.7px" width="32" height="32" viewBox="0 0 16 16" fill="#69738d"><path d="M1 2.750C1 1.784 1.784 1 2.750 1h10.500c.966 0 1.750.784 1.750 1.750v7.500A1.750 1.750 0 0 1 13.250 12H9.060l-2.573 2.573A1.458 1.458 0 0 1 4 13.543V12H2.750A1.750 1.750 0 0 1 1 10.250Zm1.750-.25a.25.25 0 0 0-.25.25v7.500c0 .138.112.25.25.25h2a.75.75 0 0 1 .75.75v2.190l2.720-2.720a.749.749 0 0 1 .53-.22h4.500a.25.25 0 0 0 .25-.25v-7.500a.25.25 0 0 0-.25-.25Z"/></svg>
<div class="b" style="left:2654.0px;top:1030.0px;width:2.0px;height:32.0px;background:#dfe2ee"></div>
<svg style="left:2672.3px;top:1029.7px" width="32" height="32" viewBox="0 0 16 16" fill="#69738d"><path d="m7.775 3.275 1.250-1.250a3.500 3.500 0 1 1 4.950 4.950l-2.500 2.500a3.500 3.500 0 0 1-4.950 0 .751.751 0 0 1 .018-1.042.751.751 0 0 1 1.042-.018 1.998 1.998 0 0 0 2.830 0l2.500-2.500a2.002 2.002 0 0 0-2.830-2.830l-1.250 1.250a.751.751 0 0 1-1.042-.018.751.751 0 0 1-.018-1.042Zm-4.690 9.640a1.998 1.998 0 0 0 2.830 0l1.250-1.250a.751.751 0 0 1 1.042.018.751.751 0 0 1 .018 1.042l-1.250 1.250a3.500 3.500 0 1 1-4.950-4.950l2.500-2.500a3.500 3.500 0 0 1 4.950 0 .751.751 0 0 1-.018 1.042.751.751 0 0 1-1.042.018 1.998 1.998 0 0 0-2.830 0l-2.500 2.500a1.998 1.998 0 0 0 0 2.830Z"/></svg>
<div class="b" style="left:1204.0px;top:1100.0px;width:1516.0px;height:2.0px;background:#dfe3f0"></div>
<svg style="left:1210.3px;top:1126.3px" width="19.0" height="26.0" viewBox="0 0 19 26"><path d="M3.3 12.5V7.8a6.1 6.1 0 0 1 12.2 0v1" fill="none" stroke="#3a3f58" stroke-width="4" stroke-linecap="butt"/><path fill-rule="evenodd" fill="#3a3f58" d="M2.4 11.4h14.2a2.4 2.4 0 0 1 2.4 2.4v9.8a2.4 2.4 0 0 1-2.4 2.4H2.4A2.4 2.4 0 0 1 0 23.600v-9.8a2.4 2.4 0 0 1 2.4-2.400ZM9.4 15.6a3.500 3.500 0 1 0 .001 0Z"/></svg>
<span id="t57" class="t s" style="left:1244.8px;top:1121.0px;font-size:29px;line-height:38px;color:#373d55;font-weight:400;letter-spacing:0.430px;">Vulnerability</span>
<svg style="left:1415px;top:1133.5px" width="24" height="16" viewBox="0 0 24 16" fill="none" stroke="#535a73" stroke-width="1.800" stroke-linecap="round" stroke-linejoin="round"><path d="M3.900 4.300l8.100 7.500 8.100-7.500"/></svg>
<div class="b" style="left:1460.0px;top:1126.0px;width:28.0px;height:28.0px;background:#f2695f;border-radius:50%"></div>
<div class="b" style="left:1468.8px;top:1138.6px;width:10.6px;height:3.0px;background:#fff;border-radius:1px"></div>
<span id="t58" class="t s" style="left:1498.8px;top:1121.0px;font-size:29px;line-height:38px;color:#373d55;font-weight:400;letter-spacing:-0.029px;">Blocker</span>
<svg style="left:1602.7px;top:1133.5px" width="24" height="16" viewBox="0 0 24 16" fill="none" stroke="#535a73" stroke-width="1.800" stroke-linecap="round" stroke-linejoin="round"><path d="M3.900 4.300l8.100 7.500 8.100-7.500"/></svg>
<div class="b" style="left:1648.0px;top:1126.0px;width:28.0px;height:28.0px;border:2.6px solid #bcc5db;border-radius:50%"></div>
<div class="b" style="left:1658.4px;top:1136.4px;width:7.2px;height:7.2px;background:#c0c9de;border-radius:50%"></div>
<span id="t59" class="t s" style="left:1687.5px;top:1121.0px;font-size:29px;line-height:38px;color:#373d55;font-weight:400;letter-spacing:0.280px;">Confirmed</span>
<svg style="left:1831.7px;top:1133.5px" width="24" height="16" viewBox="0 0 24 16" fill="none" stroke="#535a73" stroke-width="1.800" stroke-linecap="round" stroke-linejoin="round"><path d="M3.900 4.300l8.100 7.500 8.100-7.500"/></svg>
<svg style="left:1874.8px;top:1123.3px" width="33" height="33" viewBox="0 0 33 33"><defs><clipPath id="avc"><circle cx="16.5" cy="16.5" r="16.5"/></clipPath></defs><g clip-path="url(#avc)"><rect width="33" height="33" fill="#4d57b9"/><rect x="9.2" y="9.2" width="3" height="3" fill="#eef0fa"/><rect x="13.0" y="9.2" width="3" height="3" fill="#eef0fa"/><rect x="16.8" y="9.2" width="3" height="3" fill="#eef0fa"/><rect x="20.6" y="9.2" width="3" height="3" fill="#eef0fa"/><rect x="9.2" y="13.0" width="3" height="3" fill="#eef0fa"/><rect x="13.0" y="13.0" width="3" height="3" fill="#eef0fa"/><rect x="16.8" y="13.0" width="3" height="3" fill="#eef0fa"/><rect x="20.6" y="13.0" width="3" height="3" fill="#eef0fa"/><rect x="9.2" y="16.8" width="3" height="3" fill="#eef0fa"/><rect x="13.0" y="16.8" width="3" height="3" fill="#eef0fa"/><rect x="16.8" y="16.8" width="3" height="3" fill="#eef0fa"/><rect x="20.6" y="16.8" width="3" height="3" fill="#eef0fa"/><rect x="9.2" y="20.6" width="3" height="3" fill="#eef0fa"/><rect x="13.0" y="20.6" width="3" height="3" fill="#eef0fa"/><rect x="16.8" y="20.6" width="3" height="3" fill="#eef0fa"/><rect x="20.6" y="20.6" width="3" height="3" fill="#eef0fa"/><path d="M9.4 0.3999999999999999l3 3.200 3-3.200v5.200l-3-2.600-3 2.600z" fill="#f1f2fb"/><path d="M17.6 0.3999999999999999l3 3.200 3-3.200v5.200l-3-2.600-3 2.600z" fill="#f1f2fb"/><path d="M9.4 27.4l3 3.200 3-3.200v5.200l-3-2.600-3 2.600z" fill="#f1f2fb"/><path d="M17.6 27.4l3 3.200 3-3.200v5.200l-3-2.600-3 2.600z" fill="#f1f2fb"/><path d="M0 9.8l3 3.200 3-3.200v5.200l-3-2.600-3 2.600z" fill="#f1f2fb"/><path d="M0 18.0l3 3.200 3-3.200v5.200l-3-2.600-3 2.600z" fill="#f1f2fb"/><path d="M27 9.8l3 3.200 3-3.200v5.200l-3-2.600-3 2.600z" fill="#f1f2fb"/><path d="M27 18.0l3 3.200 3-3.200v5.200l-3-2.600-3 2.600z" fill="#f1f2fb"/><circle cx="6.2" cy="6.2" r="2.400" fill="#c9cdef"/><circle cx="26.8" cy="6.2" r="2.400" fill="#c9cdef"/><circle cx="6.2" cy="26.8" r="2.400" fill="#c9cdef"/><circle cx="26.8" cy="26.8" r="2.400" fill="#c9cdef"/></g></svg>
<span id="t60" class="t s" style="left:1924.4px;top:1121.0px;font-size:29px;line-height:38px;color:#373d55;font-weight:400;letter-spacing:0.550px;">thomas-chauchefoin-sonarsource</span>
<svg style="left:2378.2px;top:1133.5px" width="24" height="16" viewBox="0 0 24 16" fill="none" stroke="#535a73" stroke-width="1.800" stroke-linecap="round" stroke-linejoin="round"><path d="M3.900 4.300l8.100 7.500 8.100-7.500"/></svg>
<span id="t61" class="t s" style="left:2422.0px;top:1120.0px;font-size:29px;line-height:38px;color:#373d55;font-weight:400;letter-spacing:0.824px;">30min effort</span>
<span id="t62" class="t s" style="left:1212.7px;top:1162.0px;font-size:29px;line-height:38px;color:#373d55;font-weight:400;letter-spacing:0.192px;">No tags</span>
<div class="b" style="left:1330.4px;top:1158.5px;width:35.6px;height:47.0px;background:#eceef7;border-radius:4px"></div>
<svg style="left:1340.200px;top:1174.800px" width="16" height="16" viewBox="0 0 16 16" stroke="#333a52" stroke-width="2.2" fill="none"><path d="M8 1.600v12.800M1.600 8h12.800"/></svg>
</div></body></html>
